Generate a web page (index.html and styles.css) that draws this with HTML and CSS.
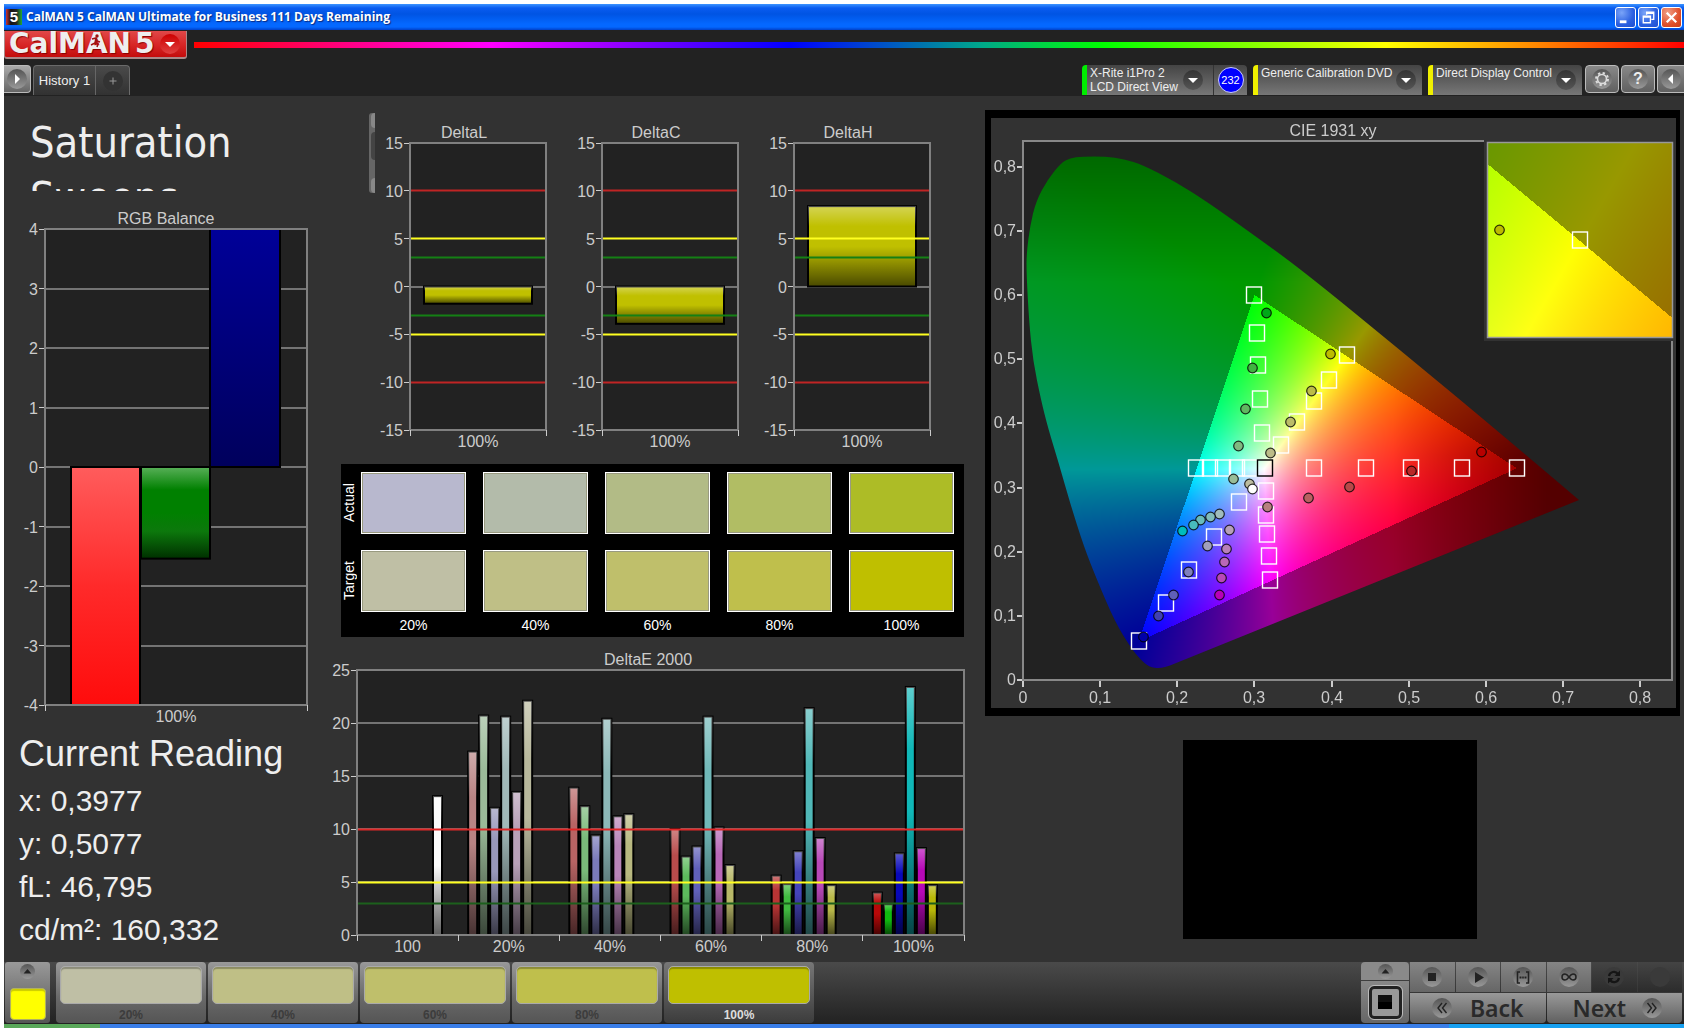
FILE: index.html
```html
<!DOCTYPE html>
<html lang="en">
<head>
<meta charset="utf-8">
<title>CalMAN 5</title>
<link rel="stylesheet" href="styles.css">
</head>
<body>
<div class="window">
  <header class="titlebar">
    <span class="app-icon">5</span>
    <h1 class="titlebar-text">CalMAN 5 CalMAN Ultimate for Business 111 Days Remaining</h1>
    <button class="win-btn" aria-label="Minimize"><svg viewBox="0 0 20 20"><path d="M4 13h7v3H4z" fill="#fff"/></svg></button>
    <button class="win-btn" aria-label="Restore"><svg viewBox="0 0 20 20"><path d="M8 7V4.500h7.500V12H13M8 5.500h7.500M4.500 8.500h7.500v7h-7.500zM4.500 9.500h7.500" fill="none" stroke="#fff" stroke-width="1.400"/></svg></button>
    <button class="win-btn win-close" aria-label="Close"><svg viewBox="0 0 20 20"><path d="M5 5l10 10M15 5L5 15" stroke="#fff" stroke-width="2.400"/></svg></button>
  </header>

  <div class="header">
    <div class="brand-row">
      <button class="logo" aria-label="CalMAN 5 menu">
        <span class="logo-text">CalMAN</span><span class="logo-text logo-five">5</span>
        <svg class="runner" viewBox="0 0 14 14"><circle cx="8" cy="2" r="1.700" fill="#a01010"/><path d="M3 5l4-1 1 3 3 1M7 4L6 9l-4 2M6 8l3 2-1 3" fill="none" stroke="#a01010" stroke-width="1.500"/></svg>
        <span class="knob knob-red"><svg viewBox="0 0 20 20"><path d="M5 8h10l-5 5z" fill="#fff"/></svg></span>
      </button>
      <div class="rainbow"></div>
    </div>
    <div class="tab-row">
      <button class="square-btn edge-left" aria-label="Expand left panel"><span class="knob"><svg viewBox="0 0 20 20"><path d="M8 5v10l5-5z" fill="#fff"/></svg></span></button>
      <div class="tabs">
        <button class="tab-name">History 1</button>
        <button class="tab-add" aria-label="Add tab"><span class="knob knob-dark"><svg viewBox="0 0 20 20"><path d="M10 6.500v7M6.500 10h7" stroke="#999"/></svg></span></button>
      </div>
      <div class="device meter">
        <button class="device-name">X-Rite i1Pro 2<br>LCD Direct View</button>
        <span class="knob knob-dark"><svg viewBox="0 0 20 20"><path d="M5 8h10l-5 5z" fill="#fff"/></svg></span>
        <span class="badge-cell"><span class="badge">232</span></span>
      </div>
      <div class="device source">
        <button class="device-name">Generic Calibration DVD</button>
        <span class="knob knob-dark"><svg viewBox="0 0 20 20"><path d="M5 8h10l-5 5z" fill="#fff"/></svg></span>
      </div>
      <div class="device display">
        <button class="device-name">Direct Display Control</button>
        <span class="knob knob-dark"><svg viewBox="0 0 20 20"><path d="M5 8h10l-5 5z" fill="#fff"/></svg></span>
      </div>
      <button class="square-btn" aria-label="Settings"><span class="knob"><svg viewBox="0 0 20 20"><circle cx="10" cy="10" r="4.500" fill="none" stroke="#ddd" stroke-width="1.600"/><circle cx="10" cy="10" r="6" fill="none" stroke="#ddd" stroke-width="2" stroke-dasharray="2.350 2.350"/></svg></span></button>
      <button class="square-btn help" aria-label="Help"><span class="knob">?</span></button>
      <button class="square-btn edge-right" aria-label="Expand right panel"><span class="knob"><svg viewBox="0 0 20 20"><path d="M12 5v10l-5-5z" fill="#fff"/></svg></span></button>
    </div>
  </div>

  <main class="workspace">
    <section class="col-left">
      <div class="page-title">
        <h2>Saturation<br>Sweeps</h2>
        <div class="scroll"><i class="scroll-end"></i><i class="scroll-thumb"></i><i class="scroll-end"></i></div>
      </div>
      <svg class="chart" id="rgb" viewBox="4 205 331 525" role="img" aria-label="RGB Balance"></svg>
      <div class="reading">
        <h3>Current Reading</h3>
        <p>x: 0,3977</p>
        <p>y: 0,5077</p>
        <p>fL: 46,795</p>
        <p>cd/m²: 160,332</p>
      </div>
    </section>

    <section class="col-mid">
      <div class="deltas">
        <svg class="chart" id="deltaL" viewBox="0 0 192 350" role="img" aria-label="DeltaL"></svg>
        <svg class="chart" id="deltaC" viewBox="0 0 192 350" role="img" aria-label="DeltaC"></svg>
        <svg class="chart" id="deltaH" viewBox="0 0 192 350" role="img" aria-label="DeltaH"></svg>
      </div>
      <div class="compare">
        <span class="side">Actual</span>
        <span class="patch a20"></span><span class="patch a40"></span><span class="patch a60"></span><span class="patch a80"></span><span class="patch a100"></span>
        <span class="side">Target</span>
        <span class="patch t20"></span><span class="patch t40"></span><span class="patch t60"></span><span class="patch t80"></span><span class="patch t100"></span>
        <span></span><span class="cap">20%</span><span class="cap">40%</span><span class="cap">60%</span><span class="cap">80%</span><span class="cap">100%</span>
      </div>
      <svg class="chart" id="deltaE" viewBox="335 645 640 315" role="img" aria-label="DeltaE 2000"></svg>
    </section>

    <section class="col-right">
      <div class="cie-frame"><svg class="chart" id="cie" viewBox="991 118 685 590" role="img" aria-label="CIE 1931 xy"></svg></div>
      <div class="pattern"></div>
    </section>
  </main>

  <footer class="toolbar">
    <button class="current" aria-label="Current colour">
      <span class="knob knob-small"><svg viewBox="0 0 20 20"><path d="M4 13h12l-6-7z" fill="#222"/></svg></span>
      <span class="current-color"></span>
    </button>
    <div class="steps">
      <button class="step"><span class="chip t20"></span>20%</button>
      <button class="step"><span class="chip t40"></span>40%</button>
      <button class="step"><span class="chip t60"></span>60%</button>
      <button class="step"><span class="chip t80"></span>80%</button>
      <button class="step active"><span class="chip t100"></span>100%</button>
    </div>
    <div class="pattern-box">
      <button class="pattern-up" aria-label="Pattern list"><span class="knob knob-small"><svg viewBox="0 0 20 20"><path d="M4 13h12l-6-7z" fill="#222"/></svg></span></button>
      <button class="pattern-btn" aria-label="Window pattern"><span class="pattern-icon"></span></button>
    </div>
    <div class="transport">
      <button aria-label="Stop"><span class="knob"><svg viewBox="0 0 20 20"><path d="M6 6h8v8H6z" fill="#222"/></svg></span></button>
      <button aria-label="Play"><span class="knob"><svg viewBox="0 0 20 20"><path d="M7 5v11l9-5.500z" fill="#222"/></svg></span></button>
      <button aria-label="Read series"><span class="knob"><svg viewBox="0 0 20 20"><path d="M7 5H4.500v11H7M13 5h2.500v11H13" fill="none" stroke="#222" stroke-width="1.600"/><path d="M6.500 9.500h2v2h-2zM9.200 9.500h1.600v2H9.200zM11.500 9.500h2v2h-2z" fill="#222"/></svg></span></button>
      <button aria-label="Read continuously"><span class="knob"><svg viewBox="0 0 20 20"><path d="M10 10C8.500 8 7.500 7 6 7a3 3 0 0 0 0 6c1.500 0 2.500-1 4-3s2.500-3 4-3a3 3 0 0 1 0 6c-1.500 0-2.500-1-4-3z" fill="none" stroke="#222" stroke-width="1.500"/></svg></span></button>
      <button class="off" aria-label="Refresh" disabled><span class="knob"><svg viewBox="0 0 20 20"><path d="M5 9a5 5 0 0 1 9-2M15 11a5 5 0 0 1-9 2" fill="none" stroke="#151515" stroke-width="2.200"/><path d="M16 3.500v5.500h-5.500zM4 16.500V11h5.500z" fill="#151515"/></svg></span></button>
      <button class="off" aria-label="Record" disabled><span class="knob"></span></button>
      <button class="nav"><span class="knob"><svg viewBox="0 0 20 20"><path d="M10 5l-4 5 4 5M14.500 5l-4 5 4 5" fill="none" stroke="#222" stroke-width="1.400"/></svg></span>Back</button>
      <button class="nav next">Next<span class="knob"><svg viewBox="0 0 20 20"><path d="M5.500 5l4 5-4 5M10 5l4 5-4 5" fill="none" stroke="#222" stroke-width="1.400"/></svg></span></button>
    </div>
  </footer>
  <div class="taskbar"><span class="start"></span><span class="tray"></span></div>
</div>
<script src="charts.js"></script>
</body>
</html>
```
FILE: styles.css
```css
* { box-sizing: border-box; }
body { margin: 0; padding: 4px 4px 0; background: #fff; font-family: "Liberation Sans", Arial, sans-serif; color: #eee; }
h1, h2, h3, p { margin: 0; font-weight: normal; }
button { margin: 0; padding: 0; border: 0; background: none; font: inherit; color: inherit; }
.window { display: flex; flex-direction: column; min-height: calc(100vh - 4px); background: #323232; overflow: hidden; }

.titlebar { display: flex; align-items: center; gap: 2px; height: 26px; padding: 0 2px; background: linear-gradient(#3c94ff 0, #0a5cf0 4px, #0054e3 10px, #0468ff 20px, #0468ff 23px, #0040c8 26px); }
.app-icon { width: 16px; height: 16px; background: linear-gradient(90deg, #c33, #111 30%, #222 65%, #2a3); color: #fff; font: bold 15px/16px "Liberation Sans", sans-serif; text-align: center; }
.titlebar-text { flex: 1; padding-left: 2px; font: bold 12px/20px "Open Sans", sans-serif; color: #fff; text-shadow: 1px 1px 1px #0a2a80; }
.win-btn { width: 21px; height: 21px; border: 1px solid #fff; border-radius: 3px; background: radial-gradient(circle at 30% 25%, #7aa4f8, #2a5fe0 60%, #1e4fd0); }
.win-btn svg { display: block; width: 19px; height: 19px; }
.win-close { background: radial-gradient(circle at 30% 25%, #f0a088, #e0502c 60%, #c83c18); }

.header { background: #222; height: 66px; display: flex; flex-direction: column; justify-content: space-between; }
.brand-row { display: flex; gap: 7px; padding-top: 1px; }
.logo { position: relative; display: flex; align-items: center; gap: 4px; width: 183px; height: 28px; padding: 0 6px 0 4px; overflow: hidden; background: linear-gradient(#e04848, #d82828 50%, #c40c0c); border: solid #a88; border-width: 0 1px 2px; border-radius: 0 0 3px 3px; }
.logo-text { font: bold 28px/24px "DejaVu Sans", sans-serif; color: #eee; text-shadow: 1px 1px 1px #800; }
.logo .knob { margin-left: auto; }
.runner { position: absolute; left: 84px; top: 3px; width: 14px; height: 14px; }
.rainbow { flex: 1; height: 6px; margin-top: 11px; background: linear-gradient(90deg, #f00 0, #f0f 20%, #60f 32%, #00f 40%, #0a8 53%, #0f0 61%, #ff0 80%, #f80 90%, #f00 100%); }
.knob { display: flex; flex: none; align-items: center; justify-content: center; width: 20px; height: 20px; border-radius: 50%; background: linear-gradient(#555, #999); }
.knob svg { width: 20px; height: 20px; }
.knob-dark { background: linear-gradient(#333, #555); }
.knob-red { background: linear-gradient(#c00, #e04040); }
.knob-small { width: 15px; height: 15px; }
.knob-small svg { width: 13px; height: 13px; }

.tab-row { display: flex; height: 31px; padding-bottom: 1px; }
.square-btn { display: flex; align-items: center; justify-content: center; width: 34px; height: 28px; margin-right: 2px; border: 1px solid #bbb; border-radius: 4px; background: linear-gradient(#888, #606060); }
.edge-left { width: 27px; border-left: 0; border-radius: 0 4px 4px 0; background: linear-gradient(#aaa, #666); }
.edge-right { width: 27px; margin-right: 0; border-right: 0; border-radius: 4px 0 0 4px; }
.help { font-size: 16px; font-weight: bold; }
.tabs { display: flex; width: 97px; margin-right: auto; border: solid #6a6a6a; border-width: 1px 1px 0; border-radius: 4px 4px 0 0; background: linear-gradient(#4a4a4a, #323232); }
.tab-name { width: 62px; font-size: 13px; border-right: 1px solid #666; }
.tab-add { display: flex; flex: 1; align-items: center; justify-content: center; }
.tab-add .knob { background: #333; }
.device { display: flex; align-items: center; margin-right: 6px; padding-right: 6px; border-left: 5px solid #f0f000; border-radius: 4px 4px 0 0; background: linear-gradient(#444, #777); font-size: 12px; line-height: 14px; }
.device-name { flex: 1; align-self: flex-start; padding: 1px 0 0 3px; text-align: left; white-space: nowrap; }
.meter { width: 165px; padding-right: 0; border-left-color: #0e0; }
.source { width: 169px; }
.display { width: 154px; margin-right: 3px; }
.badge-cell { display: flex; align-items: center; justify-content: center; width: 34px; height: 100%; margin-left: 10px; border-left: 1px solid #333; }
.badge { width: 26px; height: 26px; border: 1px solid #ccf; border-radius: 50%; background: #00f; font-size: 11px; line-height: 24px; text-align: center; color: #fff; }

.workspace { display: grid; flex: 1; grid-template-columns: minmax(0, 331fr) minmax(0, 640fr) minmax(0, 709fr); align-items: start; border-left: 0; }
.chart { display: block; width: 100%; height: auto; overflow: visible; font-size: 16px; }
.chart text { fill: #ccc; }
.page-title { display: flex; justify-content: space-between; height: 80px; margin: 17px -40px 12px 0; overflow: hidden; }
.page-title h2 { height: 78px; padding: 2px 0 0 26px; overflow: hidden; font: 43px/55px "DejaVu Sans Condensed", "DejaVu Sans", sans-serif; font-stretch: condensed; color: #eee; }
.scroll { display: flex; flex-direction: column; justify-content: space-between; width: 6px; padding-left: 2px; border-radius: 3px 0 0 3px; background: #666; overflow: hidden; }
.scroll-end { height: 15px; border-radius: 6px 0 0 6px; background: #888; }
.scroll-thumb { height: 28px; margin-bottom: 14px; border-radius: 6px 0 0 6px; background: #444; }
.reading { padding: 2px 0 8px 15px; font-size: 30px; line-height: 43px; }
.reading h3 { margin-bottom: 4px; font-size: 36px; line-height: 43px; }

.deltas { display: grid; grid-template-columns: repeat(3, minmax(0, 1fr)); padding: 14px 16px 0 48px; }
.compare { display: grid; grid-template-columns: 3px repeat(5, minmax(0, 1fr)); grid-template-rows: 62px 62px 18px; column-gap: 17px; row-gap: 16px; height: 173px; margin: 4px 11px 8px 6px; padding: 8px 10px 5px 0; background: #000; }
.compare .cap { margin-top: -12px; font-size: 14px; line-height: 18px; text-align: center; color: #fff; }
.side { display: flex; align-items: center; justify-content: center; width: 16px; writing-mode: vertical-rl; transform: rotate(180deg); font-size: 14px; line-height: 16px; color: #fff; }
.patch { border: 1px solid #fff; box-shadow: inset 0 0 0 1px #999a80; }
.a20 { background: #b8b8ce; } .a40 { background: #b3bbaa; } .a60 { background: #b2bb86; } .a80 { background: #b1bd64; } .a100 { background: #adbc26; }
.t20 { background: #bfbfa5; } .t40 { background: #bfbf86; } .t60 { background: #bfbf6b; } .t80 { background: #bfbf4c; } .t100 { background: #bfbf00; }

.col-right { padding: 14px 4px 0 10px; }
.cie-frame { border: solid #000; border-width: 8px 4px 8px 6px; }
.spectrum { display: block; width: 100%; height: 100%; }
.pattern { width: 294px; height: 199px; margin: 24px 0 0 198px; background: #000; }

.toolbar { display: flex; height: 62px; padding: 0 2px 1px 1px; background: linear-gradient(#4a4a4a, #222); }
.current { display: flex; flex-direction: column; align-items: center; justify-content: space-between; width: 45px; padding: 2px 0 3px; border-radius: 3px; background: linear-gradient(#999, #555); }
.current-color { width: 36px; height: 32px; border: 1px solid #b0b060; border-radius: 4px; background: #ff0; box-shadow: inset 0 2px 1px #cc0; }
.steps { display: flex; flex: 0 1 758px; gap: 2px; margin-left: 6px; }
.step { display: flex; flex: 1; flex-direction: column; align-items: center; justify-content: space-between; padding: 4px 4px 1px; border-radius: 4px; background: linear-gradient(#999, #686868 60%, #555); font-size: 12px; line-height: 14px; font-weight: bold; color: #3c3c3c; }
.chip { width: 100%; height: 38px; border: 1px solid #aaa; border-radius: 5px; box-shadow: inset 0 2px 1px #0004; }
.step.active { background: linear-gradient(#777, #3c3c3c); color: #ddd; }
.pattern-box { display: flex; flex-direction: column; gap: 1px; width: 48px; margin: 0 1px 0 auto; }
.pattern-up { display: flex; align-items: center; justify-content: center; height: 18px; border-radius: 4px 4px 0 0; background: #8a8a8a; }
.pattern-btn { display: flex; flex: 1; align-items: center; justify-content: center; border-radius: 0 0 4px 4px; background: linear-gradient(#888, #666); }
.pattern-icon { width: 33px; height: 33px; border: 3px solid #222; border-radius: 5px; outline: 1px solid #bbb; background: linear-gradient(#111 50%, #000 50%) center / 14px 14px no-repeat #999; }
.transport { display: grid; grid-template-columns: repeat(12, minmax(0, 1fr)); grid-template-rows: 30px 30px; gap: 1px; width: 272px; }
.transport button { display: flex; grid-column: span 2; align-items: center; justify-content: center; background: linear-gradient(#858585, #666); }
.transport .off { background: linear-gradient(#444, #2c2c2c); }
.transport .off .knob { background: #3a3a3a; }
.transport .nav { grid-column: span 6; gap: 16px; border-radius: 0 0 4px 4px; background: linear-gradient(#999, #606060); font: 600 23px/30px "Noto Sans", sans-serif; color: #2a2a2a; }
.transport .nav .knob { margin-right: 2px; }
.transport .next { padding-left: 8px; }
.taskbar { display: flex; justify-content: space-between; height: 4px; background: #3a7ee8; }
.start { width: 96px; background: #5aa85a; }
.tray { width: 14%; background: #18a0f0; }
```
FILE: charts.js
```js
const NS = 'http://www.w3.org/2000/svg';
function add(parent, tag, attrs, text) {
  const n = document.createElementNS(NS, tag);
  for (const k in attrs) n.setAttribute(k, attrs[k]);
  if (text !== undefined) n.textContent = text;
  parent.appendChild(n);
  return n;
}
function gradient(svg, id, stops) {
  const g = add(svg, 'linearGradient', { id, x1: 0, y1: 0, x2: 0, y2: 1 });
  stops.forEach(([o, c, a = 1]) => add(g, 'stop', { offset: o, 'stop-color': c, 'stop-opacity': a }));
}
function line(svg, x1, y1, x2, y2, stroke, w = 1, o = 1) {
  add(svg, 'line', { x1, y1, x2, y2, stroke, 'stroke-width': w, 'stroke-opacity': o, 'shape-rendering': 'crispEdges' });
}

// Plot box, value grid, bars, limit lines and labels of one bar chart.
function barChart(id, o) {
  const svg = document.getElementById(id);
  const { x, y, w, h, min, max } = o;
  const py = v => y + h * (max - v) / (max - min);
  gradient(svg, id + 'Shade', [[0, '#fff', .33], [.25, '#fff', 0], [.5, '#000', 0], [1, '#000', .62]]);
  add(svg, 'text', { x: o.titleX, y: y - 5, 'text-anchor': 'middle' }, o.title);
  add(svg, 'rect', { x, y, width: w, height: h, fill: '#222' });
  for (let v = min; v <= max; v += o.step) {
    if (o.grid(v)) line(svg, x, py(v), x + w, py(v), '#747474', 2);
    line(svg, x - 6, py(v), x, py(v), '#ccc');
    add(svg, 'text', { x: x - 7, y: Math.round(py(v)) + 6, 'text-anchor': 'end' }, v);
  }
  o.bars.forEach(b => {
    const top = py(Math.max(b.v, 0)), bh = Math.abs(py(b.v) - py(0));
    const r = { x: b.x, y: top, width: b.w, height: bh, stroke: '#000', 'stroke-width': 2 };
    add(svg, 'rect', { ...r, fill: b.fill });
    if (!b.flat) add(svg, 'rect', { ...r, fill: `url(#${id}Shade)`, stroke: 'none' });
  });
  (o.limits || []).forEach(([v, c]) => {
    line(svg, x, py(v), x + w, py(v), c, 3, .5);
    line(svg, x, py(v), x + w, py(v), c);
  });
  add(svg, 'rect', { x, y, width: w, height: h, fill: 'none', stroke: '#808080', 'stroke-width': 2, 'shape-rendering': 'crispEdges' });
  const n = o.cats.length;
  for (let i = 0; i <= n; i++) line(svg, x + w * i / n, y + h, x + w * i / n, y + h + 6, '#ccc');
  o.cats.forEach((c, i) => add(svg, 'text', { x: x + w * (i + .5) / n, y: y + h + 17, 'text-anchor': 'middle' }, c));
}

const rgbSvg = document.getElementById('rgb');
gradient(rgbSvg, 'barR', [[0, '#ff5c5c'], [.5, '#ff2a2a'], [1, '#ff0c0c']]);
gradient(rgbSvg, 'barG', [[0, '#58b058'], [.25, '#008000'], [.5, '#008000'], [.7, '#0c780c'], [1, '#003000']]);
gradient(rgbSvg, 'barB', [[0, '#000098'], [1, '#00005c']]);
barChart('rgb', {
  title: 'RGB Balance', titleX: 166, x: 45, y: 229, w: 262, h: 476, min: -4, max: 4, step: 1, grid: () => true,
  cats: ['100%'],
  bars: [
    { x: 71, w: 69, v: -4, fill: 'url(#barR)', flat: true },
    { x: 141, w: 69, v: -1.54, fill: 'url(#barG)', flat: true },
    { x: 210, w: 70, v: 4, fill: 'url(#barB)', flat: true }
  ]
});

const limitPairs = [[10, '#c02424'], [5, '#ffff20'], [3, '#148014']];
const bothSides = limitPairs.concat(limitPairs.map(([v, c]) => [-v, c]));
[['deltaL', 'DeltaL', -1.8], ['deltaC', 'DeltaC', -3.9], ['deltaH', 'DeltaH', 8.4]].forEach(([id, title, v]) =>
  barChart(id, {
    title, titleX: 81, x: 27, y: 33, w: 136, h: 287, min: -15, max: 15, step: 5, grid: k => k === 0,
    cats: ['100%'], bars: [{ x: 41, w: 108, v, fill: '#c0c000' }], limits: bothSides
  }));

const sweeps = [
  [[6, 13.1, '#fafafa']],
  [[0, 17.3, '#b88484'], [1, 20.7, '#9aba98'], [2, 12, '#9898ba'], [3, 20.6, '#a0b8b8'], [4, 13.5, '#b8a0b8'], [5, 22.1, '#b8b89c']],
  [[0, 13.9, '#b86464'], [1, 12.15, '#7aba7a'], [2, 9.4, '#7a7aba'], [3, 20.4, '#8cb8b8'], [4, 11.2, '#b884b8'], [5, 11.4, '#b8b880']],
  [[0, 10, '#b84c4c'], [1, 7.4, '#5cba5c'], [2, 8.35, '#6060ba'], [3, 20.6, '#70b8b8'], [4, 10.15, '#b868b8'], [5, 6.6, '#b8b868']],
  [[0, 5.6, '#b83434'], [1, 4.8, '#40ba40'], [2, 7.9, '#4444ba'], [3, 21.4, '#50b8b8'], [4, 9.15, '#b848b8'], [5, 4.7, '#b8b848']],
  [[0, 4, '#b80808'], [1, 2.9, '#10ba10'], [2, 7.7, '#0808ba'], [3, 23.4, '#10b8b8'], [4, 8.2, '#b808b8'], [5, 4.7, '#b8b808']]
];
barChart('deltaE', {
  title: 'DeltaE 2000', titleX: 648, x: 357, y: 670, w: 607, h: 265, min: 0, max: 25, step: 5, grid: () => true,
  cats: ['100', '20%', '40%', '60%', '80%', '100%'],
  bars: sweeps.flatMap((s, i) => s.map(([k, v, fill]) => ({ x: 367 + i * 607 / 6 + k * 11, w: 9, v, fill }))),
  limits: [[10, '#e02828'], [5, '#ffff20'], [3, '#1c601c']]
});

// CIE 1931 chromaticity diagram
const PX = 1023, PY = 680, SX = 771.5, SY = 641.5;
const mix = (v, a, b) => Math.min(1, Math.max(0, (v - a) / (b - a)));
function colorAt(x, y) {
  const X = x / y, Z = (1 - x - y) / y;
  const lin = [3.2406 * X - 1.5372 - .4986 * Z, -.9689 * X + 1.8758 + .0415 * Z, .0557 * X - .204 + 1.057 * Z];
  const top = Math.max(...lin);
  let k = Math.min(...lin) < 0 ? 152 : 255;
  k *= 1 - .45 * mix(x, .48, .68) * mix(.45 - y, -.05, .1);
  k *= 1 - .32 * mix(y, .62, .82);
  return lin.map(c => k * Math.max(0, c / top));
}
function spectrum(svg, x, y, w, h, toXY, outline) {
  const fo = add(svg, 'foreignObject', { x, y, width: w, height: h });
  const canvas = document.createElement('canvas');
  canvas.className = 'spectrum';
  canvas.width = w; canvas.height = h;
  fo.appendChild(canvas);
  const field = document.createElement('canvas');
  field.width = w; field.height = h;
  const fctx = field.getContext('2d'), img = fctx.createImageData(w, h);
  for (let j = 0; j < h; j++) for (let i = 0; i < w; i++) {
    const [cx, cy] = toXY(x + i + .5, y + j + .5);
    const c = colorAt(cx, Math.max(cy, .001)), p = 4 * (j * w + i);
    img.data[p] = c[0]; img.data[p + 1] = c[1]; img.data[p + 2] = c[2]; img.data[p + 3] = 255;
  }
  fctx.putImageData(img, 0, 0);
  const ctx = canvas.getContext('2d');
  if (outline) {
    ctx.translate(-x, -y);
    ctx.clip(outline);
    ctx.drawImage(field, x, y);
  } else ctx.drawImage(field, 0, 0);
}
// Spectral locus, as a smooth curve through its points, closed by the purple line.
const locus = [[1579, 500], [1499, 432], [1400, 350], [1302, 270], [1251, 233], [1206, 201], [1174, 181], [1143, 165], [1124, 159], [1106, 156.500], [1082, 156.500],
  [1070, 158], [1061, 163], [1048, 179], [1036, 201], [1030, 226], [1026.500, 254], [1026.500, 274], [1029, 321], [1033, 361], [1041, 400], [1048, 428], [1059, 464],
  [1070, 503], [1084, 547], [1097, 580], [1115, 622], [1131, 648], [1140, 659], [1149, 667], [1160, 668.500], [1170, 665.500]];
const shape = new Path2D();
shape.moveTo(...locus[0]);
for (let i = 1; i < locus.length - 1; i++) {
  const [a, b] = locus[i], [c, d] = locus[i + 1];
  shape.quadraticCurveTo(a, b, (a + c) / 2, (b + d) / 2);
}
shape.lineTo(...locus[locus.length - 1]);
shape.closePath();

const cie = document.getElementById('cie');
add(cie, 'rect', { x: 1023, y: 141, width: 649, height: 539, fill: '#222', stroke: '#888', 'stroke-width': 2 });
spectrum(cie, 1024, 142, 600, 537, (a, b) => [(a - PX) / SX, (PY - b) / SY], shape);
add(cie, 'text', { x: 1333, y: 136, 'text-anchor': 'middle' }, 'CIE 1931 xy');
for (let i = 0; i <= 8; i++) {
  const label = i ? '0,' + i : '0', gx = Math.round(PX + SX * i / 10), gy = Math.round(PY - SY * i / 10);
  line(cie, gx, 681, gx, 687, '#ccc', 2);
  line(cie, 1017, gy, 1022, gy, '#ccc', 2);
  add(cie, 'text', { x: gx, y: 703, 'text-anchor': 'middle' }, label);
  add(cie, 'text', { x: 1016, y: gy + 5, 'text-anchor': 'end' }, label);
}
function square(x, y, stroke = '#fff') {
  add(cie, 'rect', { x: x - 7.5, y: y - 8, width: 15, height: 16, fill: 'none', stroke, 'stroke-width': 1.4 });
}
function dot(x, y, fill) {
  add(cie, 'circle', { cx: x + .5, cy: y, r: 4.8, fill, stroke: '#000', 'stroke-opacity': .8, 'stroke-width': 1.2 });
}
[[1254, 295], [1257, 333], [1258, 365], [1260, 399], [1262, 433],
 [1347, 355], [1329, 380], [1314, 401], [1297, 422], [1281, 445],
 [1196, 468], [1210, 468], [1223, 468], [1237, 468], [1250, 468],
 [1314, 468], [1366, 468], [1411, 468], [1462, 468], [1517, 468],
 [1266, 491], [1266, 515], [1267, 534], [1269, 556], [1270, 580],
 [1239, 502], [1214, 537], [1189, 570], [1166, 603], [1139, 641]].forEach(p => square(...p));
square(1265, 468, '#000');
[[1266, 313, '#00a818'], [1252, 368, '#40b440'], [1245, 409, '#60b860'], [1238, 446, '#80b880'], [1233, 479, '#98bc98'],
 [1330, 354, '#bcbc00'], [1311, 391, '#bcbc48'], [1290, 422, '#bcbc68'], [1270, 453, '#bcbc88'], [1249, 484, '#bcbca0'],
 [1252, 489, '#fff'],
 [1267, 507, '#b88080'], [1308, 498, '#b86060'], [1349, 487, '#b84848'], [1411, 471, '#b82828'], [1481, 452, '#b80000'],
 [1219, 514, '#a0bcbc'], [1210, 517, '#80bcbc'], [1200, 520, '#68bcbc'], [1193, 525, '#48bcbc'], [1182, 531, '#00bcbc'],
 [1229, 530, '#b8a0b8'], [1226, 549, '#b880b8'], [1224, 562, '#b868b8'], [1221, 578, '#b848b8'], [1219, 595, '#b800b8'],
 [1207, 546, '#a0a0bc'], [1188, 572, '#8080bc'], [1173, 595, '#6060b8'], [1158, 616, '#4040b0'], [1143, 637, '#0000a8']].forEach(p => dot(...p));

// Magnified view round the current target
add(cie, 'rect', { x: 1484, y: 139, width: 190, height: 202, fill: '#323232' });
spectrum(cie, 1488, 143, 184, 194, (a, b) => [.4193 + (a - 1580) / (SX * 4.83), .5054 - (b - 240.5) / (SY * 6.1)]);
add(cie, 'rect', { x: 1487.5, y: 142.5, width: 185, height: 195, fill: 'none', stroke: '#999', 'stroke-width': 1.5 });
square(1580, 240);
dot(1499, 230, '#bcbc00');
```
